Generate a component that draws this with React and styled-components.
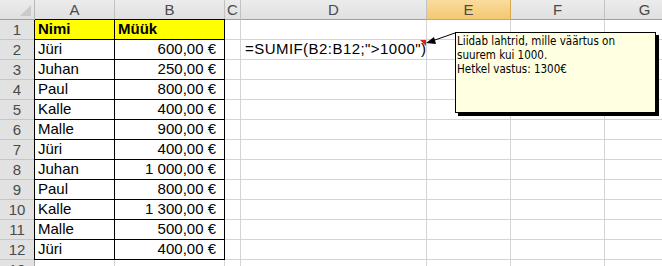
import React from 'react';
import styled, { createGlobalStyle } from 'styled-components';

const GlobalStyle = createGlobalStyle`
  html, body {
    margin: 0;
    padding: 0;
    background: #ffffff;
  }
  body {
    font-family: "Liberation Sans", Arial, sans-serif;
  }
`

// row header, A..G
const colWidths = [35, 80, 110, 16, 186, 84, 94, 80];
const colLetters = ['A', 'B', 'C', 'D', 'E', 'F', 'G'];

const rows = [
  ['Nimi', 'Müük'],
  ['Jüri', '600,00 €'],
  ['Juhan', '250,00 €'],
  ['Paul', '800,00 €'],
  ['Kalle', '400,00 €'],
  ['Malle', '900,00 €'],
  ['Jüri', '400,00 €'],
  ['Juhan', '1 000,00 €'],
  ['Paul', '800,00 €'],
  ['Kalle', '1 300,00 €'],
  ['Malle', '500,00 €'],
  ['Jüri', '400,00 €'],
  ['', ''],
];

const Sheet = styled.div`
  position: relative;
  width: 662px;
  height: 266px;
  overflow: hidden;
`
const Grid = styled.div`
  display: grid;
  grid-template-columns: ${colWidths.map(w => w + 'px').join(' ')};
  grid-auto-rows: 20px;
`
const Corner = styled.div`
  position: relative;
  background: linear-gradient(#ececec, #e0e0e0);
  border-right: 1px solid #b8b8b8;
  border-bottom: 1px solid #9e9e9e;
  &::after {
    content: '';
    position: absolute;
    right: 3px;
    bottom: 3px;
    border-left: 11px solid transparent;
    border-bottom: 11px solid #cacaca;
  }
`
const ColHead = styled.div`
  display: flex;
  align-items: center;
  justify-content: center;
  background: ${p => p.$active
    ? 'linear-gradient(#f9dc9e, #f4c870)'
    : 'linear-gradient(#ececec, #e0e0e0)'};
  border-right: 1px solid ${p => p.$active ? '#d9a64a' : '#c2c2c2'};
  border-bottom: 1px solid ${p => p.$active ? '#d9a64a' : '#9e9e9e'};
  color: #4a4a4a;
  font-size: 15px;
`
const RowHead = styled.div`
  display: flex;
  align-items: center;
  justify-content: center;
  background: #e2e2e2;
  border-right: 1px solid #a8a8a8;
  border-bottom: 1px solid #c6c6c6;
  color: #4a4a4a;
  font-size: 15px;
`
const Cell = styled.div`
  display: flex;
  align-items: flex-end;
  justify-content: ${p => p.$num ? 'flex-end' : 'flex-start'};
  padding: 0 ${p => p.$num ? '8px' : '3px'} 1px 3px;
  white-space: nowrap;
  font-size: 15px;
  line-height: 18px;
  color: #000;
  font-weight: ${p => p.$bold ? 'bold' : 'normal'};
  background: ${p => p.$fill || 'transparent'};
  border-right: 1px solid ${p => p.$boxed ? '#000' : '#d4d4d4'};
  border-bottom: 1px solid ${p => p.$boxed ? '#000' : '#d4d4d4'};
  box-shadow: ${p => p.$first ? '-1px 0 0 #000' : '0 0 0 transparent'}${p => p.$top ? ', 0 -1px 0 #000' : ''};
`
const Formula = styled(Cell)`
  position: relative;
  padding-left: 4px;
  letter-spacing: 0.45px;
`
const Marker = styled.span`
  position: absolute;
  right: 0;
  top: 0;
  border-left: 6px solid transparent;
  border-top: 6px solid #d8202a;
`
const Comment = styled.div`
  position: absolute;
  left: 455px;
  top: 32px;
  width: 198px;
  height: 78px;
  padding: 1px 0 0 1px;
  background: #ffffe1;
  border: 1px solid #000;
  box-shadow: 3px 3px 0 #000;
  font-family: Tahoma, "DejaVu Sans Condensed", "DejaVu Sans", sans-serif;
  font-size: 11.5px;
  line-height: 14px;
  color: #000;
`
const Leader = styled.svg`
  position: absolute;
  left: 0;
  top: 0;
  pointer-events: none;
`

function App() {
  return (
    <Sheet>
      <GlobalStyle />
      <Grid>
        <Corner />
        {colLetters.map(l => (
          <ColHead key={l} $active={l === 'E'}>{l}</ColHead>
        ))}
        {rows.map((r, i) => {
          const inTable = i < 12;
          return (
            <React.Fragment key={i}>
              <RowHead>{i + 1}</RowHead>
              <Cell
                $boxed={inTable}
                $first={inTable}
                $top={i === 0}
                $bold={i === 0}
                $fill={i === 0 ? '#ffff00' : null}
              >{r[0]}</Cell>
              <Cell
                $boxed={inTable}
                $top={i === 0}
                $bold={i === 0}
                $num={i > 0}
                $fill={i === 0 ? '#ffff00' : null}
              >{r[1]}</Cell>
              <Cell />
              {i === 1 ? (
                <Formula>=SUMIF(B2:B12;"&gt;1000")<Marker /></Formula>
              ) : <Cell />}
              <Cell />
              <Cell />
              <Cell />
            </React.Fragment>
          );
        })}
      </Grid>
      <Comment>
        Liidab lahtrid, mille väärtus on<br />
        suurem kui 1000.<br />
        Hetkel vastus: 1300€
      </Comment>
      <Leader width="662" height="266">
        <line x1="455" y1="33" x2="432" y2="41" stroke="#000" strokeWidth="1" />
        <polygon points="426,43 434,37 436,44" fill="#000" />
      </Leader>
    </Sheet>
  );
}

export default App;
